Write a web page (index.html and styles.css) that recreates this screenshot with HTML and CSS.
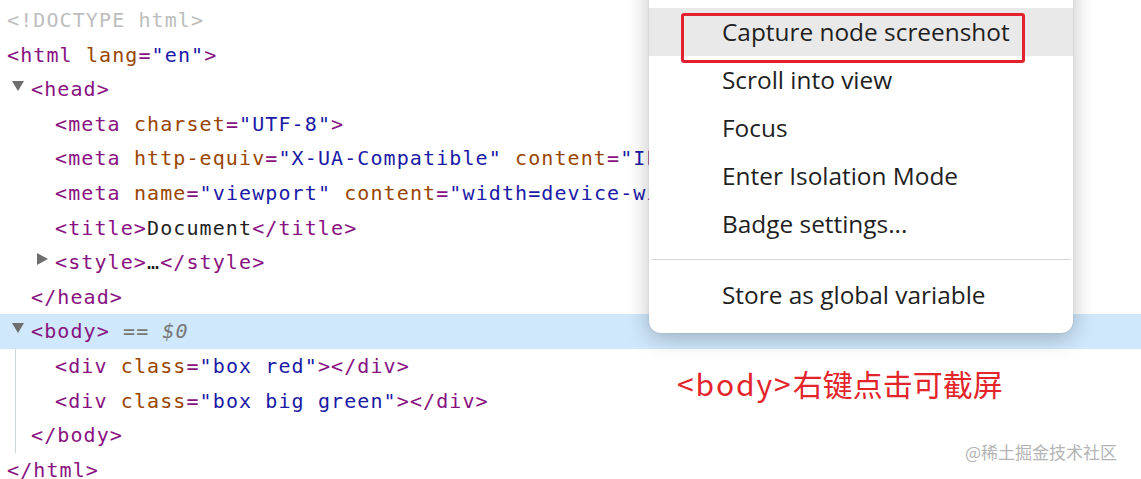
FILE: index.html
```html
<!DOCTYPE html>
<html lang="en">
<head>
<meta charset="UTF-8">
<title>Elements</title>
<link rel="stylesheet" href="styles.css">
</head>
<body>
<div class="stage">
  <div class="tree">
    <div class="line l0"><span class="doc">&lt;!DOCTYPE html&gt;</span></div>
    <div class="line l0"><span class="tg">&lt;html</span> <span class="an">lang</span><span class="tg">=</span><span class="av">"en"</span><span class="tg">&gt;</span></div>
    <div class="line l1"><span class="tw down"></span><span class="tg">&lt;head&gt;</span></div>
    <div class="line l2"><span class="tg">&lt;meta</span> <span class="an">charset</span><span class="tg">=</span><span class="av">"UTF-8"</span><span class="tg">&gt;</span></div>
    <div class="line l2"><span class="tg">&lt;meta</span> <span class="an">http-equiv</span><span class="tg">=</span><span class="av">"X-UA-Compatible"</span> <span class="an">content</span><span class="tg">=</span><span class="av">"IE=edge"</span><span class="tg">&gt;</span></div>
    <div class="line l2"><span class="tg">&lt;meta</span> <span class="an">name</span><span class="tg">=</span><span class="av">"viewport"</span> <span class="an">content</span><span class="tg">=</span><span class="av">"width=device-width, initial-scale=1.0"</span><span class="tg">&gt;</span></div>
    <div class="line l2"><span class="tg">&lt;title&gt;</span><span class="tx">Document</span><span class="tg">&lt;/title&gt;</span></div>
    <div class="line l2"><span class="tw right"></span><span class="tg">&lt;style&gt;</span><span class="tx">…</span><span class="tg">&lt;/style&gt;</span></div>
    <div class="line l1"><span class="tg">&lt;/head&gt;</span></div>
    <div class="line l1 selected"><span class="tw down"></span><span class="tg">&lt;body&gt;</span> <span class="dollar">== $0</span></div>
    <div class="children">
      <div class="line c2"><span class="tg">&lt;div</span> <span class="an">class</span><span class="tg">=</span><span class="av">"box red"</span><span class="tg">&gt;&lt;/div&gt;</span></div>
      <div class="line c2"><span class="tg">&lt;div</span> <span class="an">class</span><span class="tg">=</span><span class="av">"box big green"</span><span class="tg">&gt;&lt;/div&gt;</span></div>
      <div class="line c1"><span class="tg">&lt;/body&gt;</span></div>
    </div>
    <div class="line l0"><span class="tg">&lt;/html&gt;</span></div>
  </div>

  <div class="menu">
    <div class="item hover">Capture node screenshot</div>
    <div class="item">Scroll into view</div>
    <div class="item">Focus</div>
    <div class="item">Enter Isolation Mode</div>
    <div class="item">Badge settings...</div>
    <div class="sep"></div>
    <div class="item">Store as global variable</div>
    <div class="mark"></div>
  </div>

  <div class="note"><span class="note-tag">&lt;body&gt;</span>右键点击可截屏</div>
  <div class="wm">@稀土掘金技术社区</div>
</div>
</body>
</html>
```

FILE: styles.css
```css
html, body {
  margin: 0;
  padding: 0;
  background: #ffffff;
}

.stage {
  position: relative;
  width: 1141px;
  height: 479px;
  overflow: hidden;
}

.tree {
  padding-top: 3px;
  font-family: "DejaVu Sans Mono", "Liberation Mono", monospace;
  font-size: 20px;
  letter-spacing: 1.1px;
}

.line {
  height: 34.6px;
  line-height: 34.6px;
  white-space: pre;
  overflow: hidden;
}

.l0 { padding-left: 7px; }
.l1 { padding-left: 31px; }
.l2 { padding-left: 55px; }

.children {
  margin-left: 15px;
  border-left: 1px solid #cfd6de;
}
.c1 { padding-left: 15px; }
.c2 { padding-left: 39px; }

.selected {
  background: #cfe8fc;
}

.tg { color: #881280; }
.an { color: #994500; }
.av { color: #1a1aa6; }
.tx { color: #1f1f1f; }
.doc { color: #bdbdbd; }
.dollar { color: #777777; font-style: italic; }

.tw {
  display: inline-block;
  position: relative;
  width: 24px;
  height: 20px;
  margin-left: -24px;
  vertical-align: -3px;
}
.tw::before {
  content: "";
  position: absolute;
  width: 0;
  height: 0;
}
.tw.down::before {
  left: 5px;
  top: 2px;
  border-left: 6px solid transparent;
  border-right: 6px solid transparent;
  border-top: 10px solid #6e6e6e;
}
.tw.right::before {
  left: 6px;
  top: 1px;
  border-top: 6px solid transparent;
  border-bottom: 6px solid transparent;
  border-left: 11px solid #6e6e6e;
}

.menu {
  position: absolute;
  left: 649px;
  top: -40px;
  width: 424px;
  padding: 48px 0 14px;
  background: #ffffff;
  border-radius: 12px;
  box-shadow: 0 5px 22px rgba(0, 0, 0, 0.25), 0 0 2px rgba(0, 0, 0, 0.12);
  font-family: "Open Sans", "Noto Sans", sans-serif;
  font-size: 24.4px;
  color: #1f1f1f;
}

.item {
  height: 48px;
  line-height: 48px;
  padding-left: 73px;
  white-space: nowrap;
}

.item.hover {
  background: #e9e9e9;
}

.sep {
  height: 1px;
  background: #d6d6d6;
  margin: 11px 2px 11px 2px;
}

.mark {
  position: absolute;
  left: 32px;
  top: 53px;
  width: 338px;
  height: 44px;
  border: 3px solid #e3202f;
  border-radius: 3px;
}

.note {
  position: absolute;
  left: 677px;
  top: 364px;
  font-family: "Noto Sans CJK SC", "Noto Sans", sans-serif;
  font-size: 30px;
  line-height: 38px;
  color: #e3242b;
  white-space: nowrap;
}

.note-tag {
  letter-spacing: 1.9px;
}

.wm {
  position: absolute;
  left: 965px;
  top: 440px;
  font-family: "Noto Sans CJK SC", sans-serif;
  font-size: 17px;
  line-height: 24px;
  color: #b4b4b4;
  white-space: nowrap;
}
```
